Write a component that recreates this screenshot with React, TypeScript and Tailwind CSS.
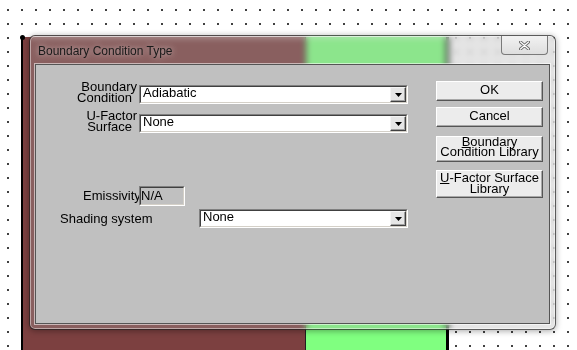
import React from "react";

function DropArrow() {
  return (
    <div className="flex w-[16px] items-center justify-center border border-t-[#f4f4f4] border-l-[#f4f4f4] border-b-[#404040] border-r-[#404040] bg-[#e6e6e6] shadow-[inset_-1px_-1px_0_#a0a0a0]">
      <svg width="7" height="4" viewBox="0 0 7 4">
        <path d="M0 0h7L3.5 4z" fill="#000" />
      </svg>
    </div>
  );
}

function Combo({ value, width }: { value: string; width: string }) {
  return (
    <div className={`${width} h-[19px] border border-t-[#808080] border-l-[#808080] border-b-white border-r-white`}>
      <div className="flex h-full border border-t-[#404040] border-l-[#404040] border-b-[#d4d0c8] border-r-[#d4d0c8] bg-white">
        <div className="flex-1 pl-[2px] text-[13px] leading-[12px] whitespace-nowrap">{value}</div>
        <DropArrow />
      </div>
    </div>
  );
}

function Btn({ children, h, pad }: { children: React.ReactNode; h: string; pad: string }) {
  return (
    <div
      className={`${h} ${pad} w-[107px] border border-t-white border-l-white border-b-[#555] border-r-[#555] bg-[#ececec] text-center text-[13px] shadow-[inset_-1px_-1px_0_#a8a8a8]`}
    >
      {children}
    </div>
  );
}

export default function App() {
  return (
    <div className="relative h-[350px] w-[577px] overflow-hidden bg-white bg-[radial-gradient(circle_at_1px_1px,#404040_0.9px,transparent_1px)] bg-[length:14px_14px] bg-[position:7px_9px] font-['Liberation_Sans',Arial,sans-serif] text-black">
      {/* shape on the canvas behind the dialog */}
      <div className="relative ml-[21px] mt-[37px] flex h-[313px] w-[428px]">
        <div className="w-[2px] bg-black" />
        <div className="w-[282px] bg-[#7c4040]" />
        <div className="w-[1px] bg-[#202020]" />
        <div className="w-[140px] bg-[#80ff80]" />
        <div className="w-[3px] bg-black" />
        <div className="absolute -left-[1px] -top-[2px] h-[5px] w-[5px] rounded-full bg-black" />
      </div>

      {/* dialog window */}
      <div className="absolute left-[29px] top-[35px] flex h-[295px] w-[527px] flex-col rounded-[6px] border border-[rgba(0,0,0,0.6)] bg-[rgba(170,170,170,0.3)] shadow-[0_1px_6px_rgba(0,0,0,0.35),inset_0_0_0_1px_rgba(255,255,255,0.45)] backdrop-blur-[3px]">
        <div className="flex h-[28px] items-start justify-between pr-[7px]">
          <div className="pl-[8px] pt-[8px] text-[12px] leading-[14px] text-[#1a1a1a] [text-shadow:0_0_6px_rgba(255,255,255,0.7)]">
            Boundary Condition Type
          </div>
          <div className="flex h-[19px] w-[47px] items-center justify-center rounded-b-[4px] border border-t-0 border-[#7a7a7a] bg-gradient-to-b from-[#f2f2f2] to-[#dedede]">
            <svg width="11" height="9" viewBox="0 0 11 9">
              <path d="M1.5 1l8 7M9.5 1l-8 7" stroke="#6a6a6a" strokeWidth="3" strokeLinecap="round" />
              <path d="M1.5 1l8 7M9.5 1l-8 7" stroke="#fff" strokeWidth="1.2" strokeLinecap="round" />
            </svg>
          </div>
        </div>

        <div className="mx-[5px] mb-[5px] flex flex-1 border border-[#555] bg-[#c0c0c0] shadow-[0_0_0_1px_rgba(255,255,255,0.55)]">
          <div className="flex w-[372px] flex-col">
            <div className="mt-[16px] flex items-start">
              <div className="w-[101px] text-right text-[13px] leading-[11px]">
                <div>Boundary</div>
                <div className="pr-[5px]">Condition</div>
              </div>
              <div className="ml-[2px] mt-[4px]">
                <Combo value="Adiabatic" width="w-[269px]" />
              </div>
            </div>

            <div className="mt-[6px] flex items-start">
              <div className="w-[101px] text-right text-[13px] leading-[11px]">
                <div>U-Factor</div>
                <div className="pr-[5px]">Surface</div>
              </div>
              <div className="ml-[2px] mt-[4px]">
                <Combo value="None" width="w-[269px]" />
              </div>
            </div>

            <div className="mt-[53px] flex h-[20px] items-center">
              <div className="ml-[47px] w-[56px] overflow-hidden whitespace-nowrap text-[13px] leading-[20px]">
                Emissivity
              </div>
              <div className="h-[20px] w-[46px] border border-t-[#808080] border-l-[#808080] border-b-white border-r-white">
                <div className="h-full border border-t-[#404040] border-l-[#404040] border-b-[#d4d0c8] border-r-[#d4d0c8] bg-[#c0c0c0] text-[13px] leading-[16px]">
                  N/A
                </div>
              </div>
            </div>

            <div className="mt-[3px] flex items-center">
              <div className="ml-[24px] w-[139px] whitespace-nowrap text-[13px] leading-[19px]">Shading system</div>
              <Combo value="None" width="w-[209px]" />
            </div>
          </div>

          <div className="ml-[28px] flex flex-col pt-[16px]">
            <Btn h="h-[20px]" pad="leading-[15px]">OK</Btn>
            <div className="mt-[6px]">
              <Btn h="h-[20px]" pad="leading-[15px]">Cancel</Btn>
            </div>
            <div className="mt-[9px]">
              <Btn h="h-[26px]" pad="leading-[10px]">
                <div>
                  <span className="underline">B</span>oundary
                </div>
                <div>Condition Library</div>
              </Btn>
            </div>
            <div className="mt-[8px]">
              <Btn h="h-[28px]" pad="pt-[1px] leading-[11px]">
                <div>
                  <span className="underline">U</span>-Factor Surface
                </div>
                <div>Library</div>
              </Btn>
            </div>
          </div>
        </div>
      </div>
    </div>
  );
}
